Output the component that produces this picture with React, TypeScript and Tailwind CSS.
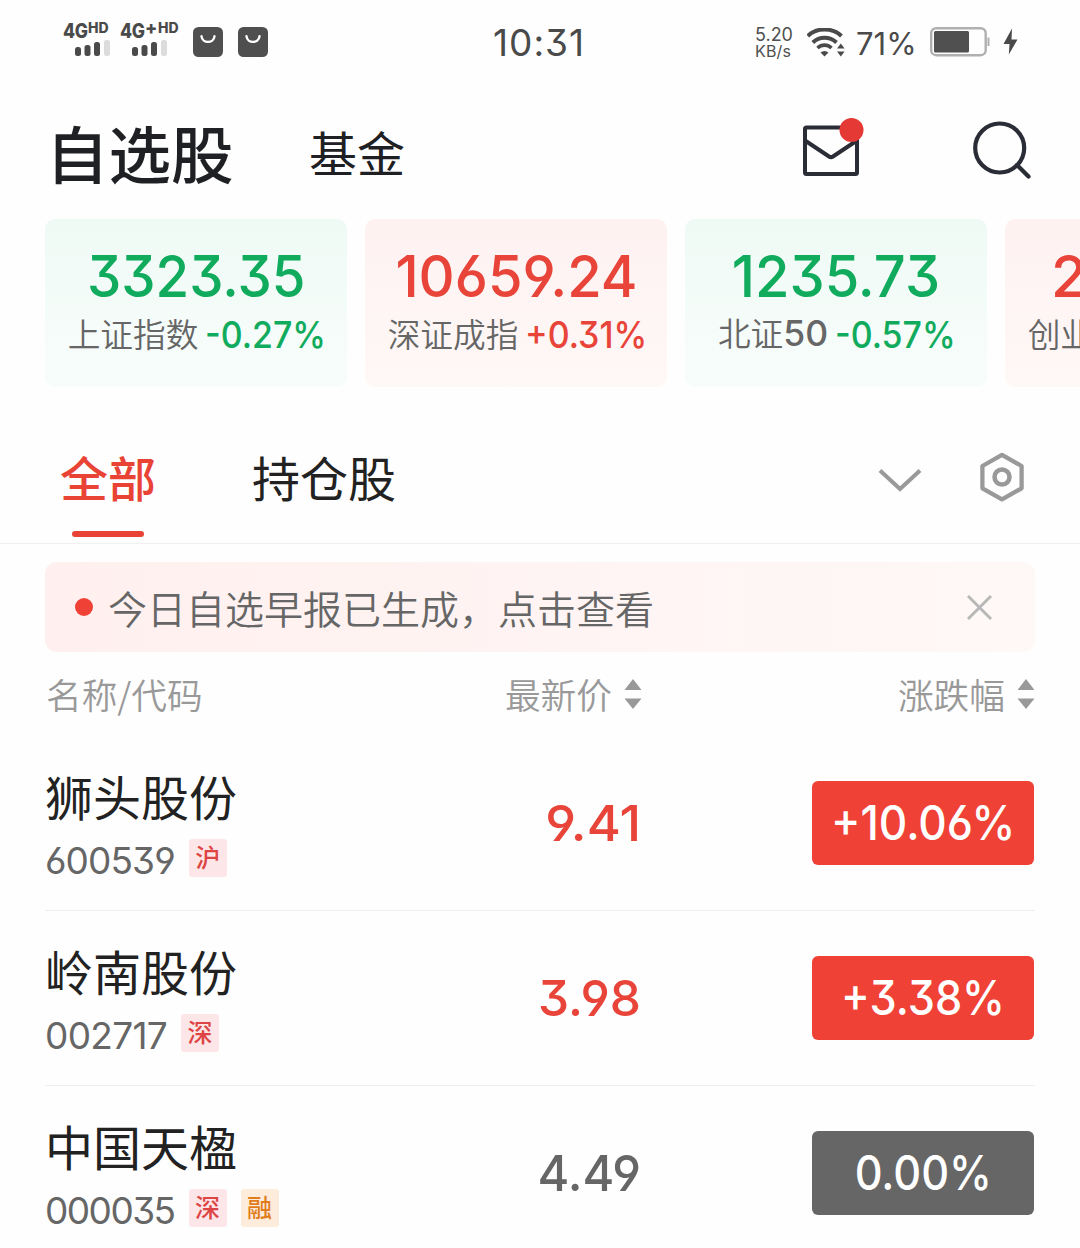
import type { ReactNode } from 'react';

const CJK = "font-['Noto_Sans_CJK_SC',sans-serif]";
const NUM = "font-['Inter',sans-serif] [font-feature-settings:'cv03','cv04','cv09']";

function Signal({ plus }: { plus?: boolean }) {
  return (
    <div className="flex h-[36px] flex-col">
      <div className={`${NUM} flex h-[14px] items-start text-[#4a4a4a]`}>
        <span className="mt-[-3px] w-[25px] origin-left scale-x-[0.88] text-[20px] leading-[20px] font-extrabold tracking-[-0.5px]">4G</span>
        {plus && <span className="mt-[-1px] w-[13px] text-[18px] leading-[10px] font-extrabold">+</span>}
        <span className="mt-[-2px] text-[14px] leading-[12px] font-extrabold">HD</span>
      </div>
      <svg width="40" height="18" viewBox="0 0 40 18" className="ml-[12px]">
        <rect x="0" y="9" width="6" height="9" rx="2.5" fill="#4a4a4a" />
        <rect x="9.5" y="7" width="6" height="11" rx="2.5" fill="#4a4a4a" />
        <rect x="19" y="4" width="6" height="14" rx="2.5" fill="#4a4a4a" />
        <rect x="29" y="2" width="6" height="16" rx="2.5" fill="#dcdcdc" />
      </svg>
    </div>
  );
}

function BagIcon() {
  return (
    <svg width="30" height="30" viewBox="0 0 30 30">
      <rect width="30" height="30" rx="5.5" fill="#4f4f4f" />
      <path d="M8.500 9.300c1 7.400 12 7.400 13 0" fill="none" stroke="#fff" strokeWidth="2.4" strokeLinecap="round" />
    </svg>
  );
}

function StatusBar() {
  return (
    <div className="flex h-[85px] shrink-0 items-center pl-[63px]">
      <div className="mt-[-1px] flex w-[430px] items-center">
        <div className="w-[57px]"><Signal /></div>
        <div className="w-[73px]"><Signal plus /></div>
        <div className="flex gap-[15px]"><BagIcon /><BagIcon /></div>
      </div>
      <div className={`${NUM} w-[262px] text-[37px] leading-none tracking-[1px] text-[#4a4a4a]`}>10:31</div>
      <div className={`${NUM} w-[52px] text-[#4f4f4f]`}>
        <div className="h-[17px] text-[18px] leading-[17px]">5.20</div>
        <div className="h-[17px] text-[16px] leading-[17px] tracking-[0.2px]">KB/s</div>
      </div>
      <svg width="40" height="30" viewBox="0 0 40 30" className="mt-px mr-[9px]" fill="none" stroke="#4a4a4a">
        <path d="M.8 8C9.500-.7 25.500-.7 34.500 8" strokeWidth="4" />
        <path d="M5.800 14.500C12.500 8.300 22.500 8.300 29.500 14.500" strokeWidth="4" />
        <path d="M10.500 20C14.500 16.200 20.500 16.200 24.500 20" strokeWidth="3.6" />
        <path d="M13.500 24.500q4-3 8 0L17.500 28.500Z" fill="#4a4a4a" stroke="none" />
        <path d="M30 20.500l3.800-5 3.800 5ZM30 23.500h7.600l-3.800 5Z" fill="#4a4a4a" stroke="none" />
      </svg>
      <div className={`${NUM} mt-px w-[74px] text-[31px] leading-none text-[#4a4a4a]`}>71%</div>
      <svg width="60" height="30" viewBox="0 0 60 30" className="mt-[-1px]">
        <rect x="1.2" y="1.2" width="54.5" height="27" rx="5" fill="none" stroke="#b0b0b0" strokeWidth="2.4" />
        <rect x="4" y="4" width="35" height="21.5" rx="1.5" fill="#505050" />
        <path d="M58.500 10.500v8.500" stroke="#b0b0b0" strokeWidth="2" />
      </svg>
      <svg width="16" height="28" viewBox="0 0 16 28" className="mt-[-1px] ml-[13px]">
        <path d="M9 0.500L0.500 16H6.500L5.800 26.500L14.500 11.500H8.500Z" fill="#4a4a4a" />
      </svg>
    </div>
  );
}

function Header() {
  return (
    <div className={`${CJK} flex h-[134px] shrink-0 items-center pl-[46px] text-[#1f2023]`}>
      <div className="w-[263px] text-[62.5px] leading-[80px] font-medium">自选股</div>
      <div className="mt-[-2px] w-[493px] text-[48px] leading-[80px]">基金</div>
      <svg width="66" height="62" viewBox="0 0 66 62" className="mb-[6px]" fill="none" stroke="#2a2d36" strokeWidth="4">
        <rect x="3" y="9.5" width="52" height="46.5" rx="1.5" />
        <path d="M3 22.500L27 38.500Q29 39.800 31 38.500L55 22.500" />
        <circle cx="49.5" cy="12" r="12" fill="#e53935" stroke="none" />
      </svg>
      <svg width="62" height="62" viewBox="0 0 62 62" className="mb-[2px] ml-[103px]" fill="none" stroke="#2a2d36" strokeWidth="4.2">
        <circle cx="28.7" cy="28" r="24.5" />
        <path d="M46 45L57.500 56.500" strokeLinecap="round" />
      </svg>
    </div>
  );
}

type Index = { value: string; name: ReactNode; pct: string; up?: boolean; fit: string };

const indices: Index[] = [
  { value: '3323.35', name: '上证指数', pct: '-0.27%', fit: 'scale-x-[0.94]' },
  { value: '10659.24', name: '深证成指', pct: '+0.31%', up: true, fit: 'scale-x-[0.965]' },
  { value: '1235.73', name: <>北证<span className={`${NUM} text-[35.5px] font-medium`}>50</span></>, pct: '-0.57%', fit: 'scale-x-[0.965]' },
  { value: '2101.68', name: '创业板指', pct: '+0.35%', up: true, fit: '' },
];

function IndexCard({ item }: { item: Index }) {
  const color = item.up ? 'text-[#e84439]' : 'text-[#11ab5e]';
  const bg = item.up ? 'from-[#fef2f1] to-[#fef8f7]' : 'from-[#effaf5] to-[#f8fdfb]';
  return (
    <div className={`${bg} flex h-[168px] w-[302px] shrink-0 flex-col items-center rounded-[10px] bg-linear-to-b pt-[27px]`}>
      <div className={`${NUM} ${color} ${item.fit} text-[58px] leading-[60px] font-medium whitespace-nowrap`}>{item.value}</div>
      <div className="flex h-[57px] items-center gap-[7px] whitespace-nowrap">
        <span className={`${CJK} pb-[4px] text-[32.7px] leading-[40px] font-[350] text-[#666]`}>{item.name}</span>
        <span className="w-[119px]">
          <span className={`${NUM} ${color} inline-block origin-left scale-x-[0.93] text-[36.5px] leading-[40px] font-medium`}>{item.pct}</span>
        </span>
      </div>
    </div>
  );
}

function Tabs() {
  return (
    <div className={`${CJK} mt-[32px] flex h-[125px] shrink-0 border-b border-[#f0f0f0] pl-[60px] text-[48px]`}>
      <div className="flex w-[192px] flex-col">
        <div className="h-[112px] pt-[21px] leading-[72px] font-medium text-[#e84335]">全部</div>
        <div className="ml-[12px] h-[6px] w-[72px] rounded-[3px] bg-[#e84335]" />
      </div>
      <div className="w-[626px] pt-[21px] leading-[72px] text-[#222]">持仓股</div>
      <svg width="46" height="28" viewBox="0 0 46 28" className="mt-[48px]" fill="none" stroke="#999" strokeWidth="4">
        <path d="M2 3.500L22 22L42 3.500" />
      </svg>
      <svg width="50" height="54" viewBox="0 0 50 54" className="mt-[31px] ml-[53px]" fill="none" stroke="#999">
        <path d="M25 4.800L44.600 16V38.300L25 49.400L5.400 38.300V16Z" strokeWidth="4.3" strokeLinejoin="round" />
        <circle cx="25" cy="27" r="7.5" strokeWidth="4.5" />
      </svg>
    </div>
  );
}

function Banner() {
  return (
    <div className="mx-[45px] mt-[18px] flex h-[90px] shrink-0 items-center rounded-[12px] bg-linear-to-r from-[#fff0ef] to-[#fef8f7] pl-[30px]">
      <div className="size-[18px] rounded-full bg-[#ef4135]" />
      <div className={`${CJK} ml-[15px] w-[856px] pb-[1px] text-[39px] leading-[60px] font-[350] text-[#666]`}>今日自选早报已生成，点击查看</div>
      <svg width="30" height="30" viewBox="0 0 30 30" stroke="#b8b8b8" strokeWidth="3">
        <path d="M4 4L27 27M27 4L4 27" />
      </svg>
    </div>
  );
}

function Sort() {
  return (
    <svg width="18" height="32" viewBox="0 0 18 32" fill="#999">
      <path d="M0.500 12L9 1L17.500 12ZM0.500 20.500H17.500L9 31Z" />
    </svg>
  );
}

function ColumnHeads() {
  return (
    <div className={`${CJK} flex h-[84px] shrink-0 items-center justify-between pr-[45px] pl-[46px] text-[35.7px] leading-[50px] font-[350] text-[#999]`}>
      <div className="w-[200px]">名称/代码</div>
      <div className="flex w-[396px] items-center justify-end gap-[12px]"><span>最新价</span><Sort /></div>
      <div className="flex w-[393px] items-center justify-end gap-[12px]"><span>涨跌幅</span><Sort /></div>
    </div>
  );
}

type Stock = {
  name: string;
  code: string;
  codeFit: string;
  tags: string[];
  price: string;
  priceFit: string;
  pct: string;
  pctFit: string;
  up: boolean;
};

const stocks: Stock[] = [
  { name: '狮头股份', code: '600539', codeFit: 'tracking-[-0.9px]', tags: ['沪'], price: '9.41', priceFit: 'scale-x-[1.04]', pct: '+10.06%', pctFit: 'scale-x-[0.92]', up: true },
  { name: '岭南股份', code: '002717', codeFit: 'tracking-[-0.7px]', tags: ['深'], price: '3.98', priceFit: 'scale-x-[0.99]', pct: '+3.38%', pctFit: 'scale-x-[0.9]', up: true },
  { name: '中国天楹', code: '000035', codeFit: 'tracking-[-1.55px]', tags: ['深', '融'], price: '4.49', priceFit: 'scale-x-[0.97]', pct: '0.00%', pctFit: 'scale-x-[0.9]', up: false },
];

function StockRow({ stock }: { stock: Stock }) {
  return (
    <div className="mx-[45px] flex h-[175px] shrink-0 items-center border-b border-[#eee]">
      <div className="h-[175px] w-[397px] pt-[25px]">
        <div className={`${CJK} text-[48px] leading-[68px] text-[#222]`}>{stock.name}</div>
        <div className="mt-[10px] flex h-[38px] items-center">
          <span className={`${NUM} ${stock.codeFit} mt-[6px] mr-[14px] text-[37px] leading-[38px] text-[#666]`}>{stock.code}</span>
          {stock.tags.map((tag) => (
            <span
              key={tag}
              className={`${CJK} mr-[14px] flex size-[38px] justify-center rounded-[3px] text-[25px] leading-[35px] font-medium ${tag === '融' ? 'bg-[#fdebdc] text-[#e07c1a]' : 'bg-[#fde6e7] text-[#dd4444]'}`}
            >
              {tag}
            </span>
          ))}
        </div>
      </div>
      <div className={`${NUM} ${stock.priceFit} w-[199px] origin-right text-right text-[50px] leading-[60px] font-medium ${stock.up ? 'text-[#e84439]' : 'text-[#666]'}`}>{stock.price}</div>
      <div className={`${NUM} ml-[171px] flex h-[84px] w-[222px] items-center justify-center rounded-[6px] text-[48px] leading-[60px] font-medium text-white ${stock.up ? 'bg-[#ef4135]' : 'bg-[#666]'}`}>
        <span className={stock.pctFit}>{stock.pct}</span>
      </div>
    </div>
  );
}

export default function App() {
  return (
    <div className="flex h-[1248px] w-[1080px] flex-col overflow-hidden bg-[#fefefe]">
      <StatusBar />
      <Header />
      <div className="flex h-[168px] shrink-0 gap-[18px] overflow-hidden pl-[45px]">
        {indices.map((item) => <IndexCard key={item.value} item={item} />)}
      </div>
      <Tabs />
      <Banner />
      <ColumnHeads />
      {stocks.map((s) => <StockRow key={s.code} stock={s} />)}
    </div>
  );
}
